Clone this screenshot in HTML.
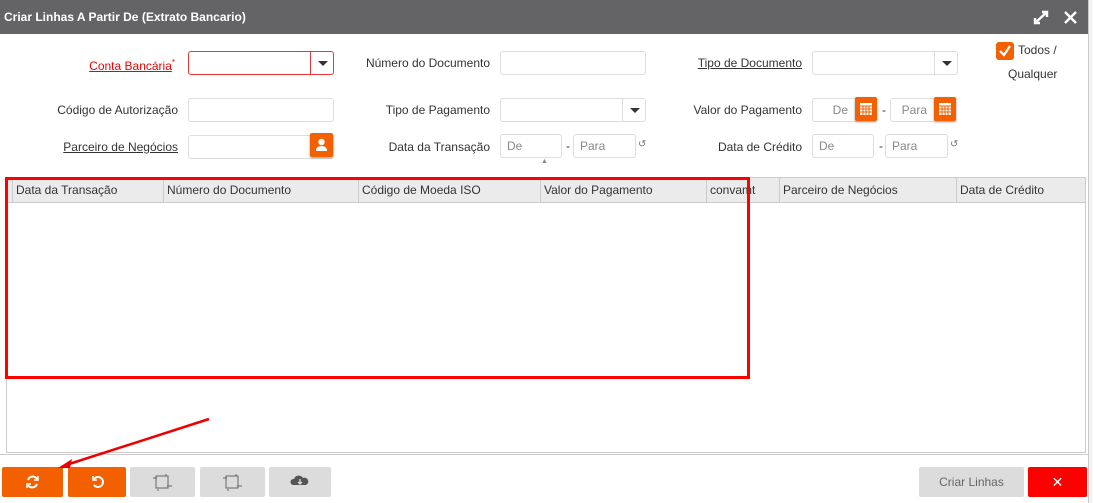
<!DOCTYPE html>
<html><head><meta charset="utf-8"><style>
*{box-sizing:border-box}
body{margin:0;width:1093px;height:503px;background:#fff;font-family:"Liberation Sans",sans-serif;font-size:12px;color:#333;position:relative;overflow:hidden}
.a{position:absolute}
.hdr{left:0;top:0;width:1088px;height:34px;background:#646466;color:#fff;font-weight:bold;font-size:12px;line-height:34px;padding-left:4px}
.lbl{text-align:right;line-height:24px;white-space:nowrap}
.u{text-decoration:underline}
.in{border:1px solid #ddd;border-radius:3px;height:24px;background:#fff;color:#888;line-height:22px;padding-left:6px}
.dd{border-left:1px solid #ddd;position:absolute;right:0;top:0;width:23px;height:22px}
.dd:after{content:"";position:absolute;left:7px;top:9px;border-left:5px solid transparent;border-right:5px solid transparent;border-top:5px solid #333}
.ob{background:#f26000;border-radius:2px;width:22px;height:24px;box-shadow:0 1px 2px #999}
.th{top:178px;height:25px;line-height:25px;border-right:1px solid #ccc;padding-left:3px;font-size:12px;color:#333}
.btn{top:467px;height:30px;border-radius:2px}
</style></head><body>
<div class="a hdr">Criar Linhas A Partir De (Extrato Bancario)</div>
<svg class="a" style="left:1033px;top:10px" width="16" height="15" viewBox="0 0 16 15"><path d="M2 13L14 2M9 2h5v5M2 8v5h5" stroke="#fff" stroke-width="2.4" fill="none"/></svg>
<svg class="a" style="left:1064px;top:11px" width="13" height="13"><path d="M1 1L12 12M12 1L1 12" stroke="#fff" stroke-width="2.4"/></svg>
<div class="a" style="left:1088px;top:0;width:5px;height:503px;background:#f4f4f4;border-left:1px solid #ccc"></div>

<div class="a lbl" style="right:918px;top:51px;color:#e00"><span class="u">Conta Bancária</span><sup style="font-size:8px">*</sup></div>
<div class="a in" style="left:188px;top:51px;width:146px;border-color:#e33"><div class="dd" style="border-color:#e33"></div></div>
<div class="a lbl" style="right:603px;top:51px">Número do Documento</div>
<div class="a in" style="left:500px;top:51px;width:146px"></div>
<div class="a lbl u" style="right:291px;top:51px">Tipo de Documento</div>
<div class="a in" style="left:812px;top:51px;width:146px"><div class="dd"></div></div>
<div class="a" style="left:996px;top:42px;width:18px;height:18px;background:#f26000;border-radius:3px"><svg width="18" height="18"><path d="M4 9l4 4 6-9" stroke="#fff" stroke-width="2.2" fill="none"/></svg></div>
<div class="a" style="left:1018px;top:43px">Todos /</div>
<div class="a" style="left:1008px;top:67px">Qualquer</div>

<div class="a lbl" style="right:915px;top:98px">Código de Autorização</div>
<div class="a in" style="left:188px;top:98px;width:146px"></div>
<div class="a lbl" style="right:603px;top:98px">Tipo de Pagamento</div>
<div class="a in" style="left:500px;top:98px;width:146px"><div class="dd"></div></div>
<div class="a lbl" style="right:291px;top:98px">Valor do Pagamento</div>
<div class="a in" style="left:812px;top:98px;width:65px;text-align:right;padding-right:28px">De</div>
<div class="a ob" style="left:855px;top:97px"><svg width="22" height="24"><rect x="5" y="6" width="12" height="12" fill="#fff"/><path d="M5 9h12M8 9v9M11 9v9M14 9v9M5 12h12M5 15h12" stroke="#f26000" stroke-width="1"/></svg></div>
<div class="a" style="left:882px;top:103px">-</div>
<div class="a in" style="left:890px;top:98px;width:66px;text-align:right;padding-right:28px">Para</div>
<div class="a ob" style="left:934px;top:97px"><svg width="22" height="24"><rect x="5" y="6" width="12" height="12" fill="#fff"/><path d="M5 9h12M8 9v9M11 9v9M14 9v9M5 12h12M5 15h12" stroke="#f26000" stroke-width="1"/></svg></div>

<div class="a lbl u" style="right:915px;top:135px">Parceiro de Negócios</div>
<div class="a in" style="left:188px;top:135px;width:146px"></div>
<div class="a ob" style="left:310px;top:133px;width:23px"><svg width="23" height="24"><circle cx="11.5" cy="9" r="3.2" fill="#fff"/><path d="M6 18q0-5 5.5-5t5.5 5z" fill="#fff"/></svg></div>
<div class="a lbl" style="right:603px;top:135px">Data da Transação</div>
<div class="a in" style="left:500px;top:134px;width:62px">De</div>
<div class="a" style="left:566px;top:139px">-</div>
<div class="a in" style="left:573px;top:134px;width:63px">Para</div>
<div class="a" style="left:638px;top:139px;font-size:10px;color:#777">↺</div>
<div class="a" style="left:541px;top:158px;font-size:7px;color:#888">▲</div>
<div class="a lbl" style="right:291px;top:135px">Data de Crédito</div>
<div class="a in" style="left:812px;top:134px;width:62px">De</div>
<div class="a" style="left:879px;top:139px">-</div>
<div class="a in" style="left:885px;top:134px;width:63px">Para</div>
<div class="a" style="left:950px;top:139px;font-size:10px;color:#777">↺</div>

<div class="a" style="left:6px;top:177px;width:1080px;height:276px;border:1px solid #ccc"></div>
<div class="a" style="left:7px;top:178px;width:1078px;height:25px;background:#ebebeb;border-bottom:1px solid #ccc"></div>
<div class="a th" style="left:7px;width:6px;padding:0"></div>
<div class="a th" style="left:13px;width:151px">Data da Transação</div>
<div class="a th" style="left:164px;width:195px">Número do Documento</div>
<div class="a th" style="left:359px;width:182px">Código de Moeda ISO</div>
<div class="a th" style="left:541px;width:166px">Valor do Pagamento</div>
<div class="a th" style="left:707px;width:73px">convamt</div>
<div class="a th" style="left:780px;width:177px">Parceiro de Negócios</div>
<div class="a th" style="left:957px;width:128px;border-right:0">Data de Crédito</div>
<div class="a" style="left:5px;top:177px;width:745px;height:202px;border:3px solid #f00"></div>
<div class="a" style="left:0;top:454px;width:1088px;height:1px;background:#ccc"></div>

<div class="a btn" style="left:2px;width:61px;background:#f26000"><svg width="61" height="30"><path d="M26 13a5 5 0 0 1 9-1M35 17a5 5 0 0 1-9 1" stroke="#fff" stroke-width="2" fill="none"/><path d="M36 9v4h-4M25 21v-4h4" stroke="#fff" stroke-width="1.6" fill="none"/></svg></div>
<div class="a btn" style="left:68px;width:58px;background:#f26000"><svg width="58" height="30"><path d="M26 12a5 5 0 1 1 0 6" stroke="#fff" stroke-width="2" fill="none"/><path d="M25 9v4h4" stroke="#fff" stroke-width="1.6" fill="none"/></svg></div>
<div class="a btn" style="left:130px;width:65px;background:#dcdcdc"><svg width="65" height="30"><rect x="26" y="9" width="12" height="12" fill="none" stroke="#666"/><path d="M23 11h4M37 19h5M28 22v2M36 7v2" stroke="#666"/></svg></div>
<div class="a btn" style="left:200px;width:65px;background:#dcdcdc"><svg width="65" height="30"><rect x="26" y="9" width="12" height="12" fill="none" stroke="#666"/><path d="M23 11h4M37 19h5M28 22v2M36 7v2" stroke="#666"/></svg></div>
<div class="a btn" style="left:269px;width:62px;background:#dcdcdc"><svg width="62" height="30"><path d="M24 18a3 3 0 0 1 1-6 5 5 0 0 1 9-1 3.5 3.5 0 0 1 3 7z" fill="#555"/><path d="M31 12v5M29 15l2 2 2-2" stroke="#dcdcdc" stroke-width="1.3" fill="none"/></svg></div>
<div class="a btn" style="left:919px;width:105px;background:#dcdcdc;color:#666;text-align:center;line-height:30px">Criar Linhas</div>
<div class="a btn" style="left:1028px;width:59px;background:#f00;color:#fff;text-align:center;line-height:30px;font-size:14px">✕</div>

<svg class="a" style="left:0;top:0" width="1093" height="503"><path d="M209 419L66 465" stroke="#e00" stroke-width="2.5"/><path d="M58 468l14-9-2 9z" fill="#e00"/></svg>
</body></html>
